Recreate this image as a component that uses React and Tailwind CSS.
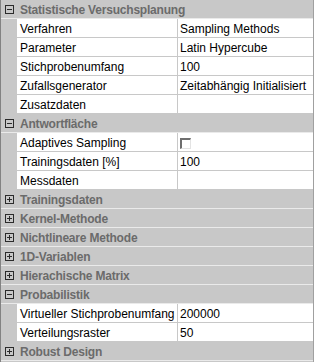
const sections = [
  {
    title: 'Statistische Versuchsplanung',
    open: true,
    rows: [
      ['Verfahren', 'Sampling Methods'],
      ['Parameter', 'Latin Hypercube'],
      ['Stichprobenumfang', '100'],
      ['Zufallsgenerator', 'Zeitabhängig Initialisiert'],
      ['Zusatzdaten', ''],
    ],
  },
  {
    title: 'Antwortfläche',
    open: true,
    rows: [
      ['Adaptives Sampling', 'checkbox'],
      ['Trainingsdaten [%]', '100'],
      ['Messdaten', ''],
    ],
  },
  { title: 'Trainingsdaten', open: false, rows: [] },
  { title: 'Kernel-Methode', open: false, rows: [] },
  { title: 'Nichtlineare Methode', open: false, rows: [] },
  { title: '1D-Variablen', open: false, rows: [] },
  { title: 'Hierachische Matrix', open: false, rows: [] },
  {
    title: 'Probabilistik',
    open: true,
    rows: [
      ['Virtueller Stichprobenumfang', '200000'],
      ['Verteilungsraster', '50'],
    ],
  },
  { title: 'Robust Design', open: false, rows: [] },
];

function ToggleBox({ open }) {
  return (
    <svg width="9" height="9" viewBox="0 0 9 9" className="shrink-0">
      <rect x="0.5" y="0.5" width="8" height="8" fill="none" stroke="#2b2b2b" />
      <line x1="2" y1="4.5" x2="7" y2="4.5" stroke="#2b2b2b" />
      {!open && <line x1="4.5" y1="2" x2="4.5" y2="7" stroke="#2b2b2b" />}
    </svg>
  );
}

function Checkbox() {
  return (
    <span className="block h-[11px] w-[11px] border-t-2 border-l-2 border-t-[#6e6e6e] border-l-[#6e6e6e] border-r border-b border-r-[#e3e3e3] border-b-[#e3e3e3] bg-white" />
  );
}

function Header({ title, open }) {
  return (
    <div className="flex h-[19px] items-center border-b border-[#eaeaea] bg-[#c8c8c8]">
      <div className="flex w-[16px] shrink-0 items-center justify-center pl-[1px]">
        <ToggleBox open={open} />
      </div>
      <span className="pl-[3px] pt-[2px] text-[12px] font-bold tracking-[-0.2px] text-[#6b6b6b]">{title}</span>
    </div>
  );
}

function Row({ label, value }) {
  return (
    <div className="flex h-[19px] bg-[#c8c8c8]">
      <div className="w-[16px] shrink-0" />
      <div className="flex w-[160px] shrink-0 items-center overflow-hidden whitespace-nowrap border-b border-[#c8c8c8] bg-white pl-[3px] pt-[2px]">
        {label}
      </div>
      <div className="flex flex-1 items-center overflow-hidden whitespace-nowrap border-b border-l border-[#c8c8c8] bg-white pl-[2px] pt-[2px]">
        {value === 'checkbox' ? <Checkbox /> : value}
      </div>
    </div>
  );
}

export default function App() {
  return (
    <div
      className="h-[362px] w-[314px] overflow-hidden border-l border-r border-l-[#828282] border-r-[#a0a0a0] bg-[#c8c8c8] text-[12px] leading-none text-black"
      style={{ fontFamily: '"Liberation Sans", Arial, sans-serif' }}
    >
      {sections.map((s) => (
        <div key={s.title}>
          <Header title={s.title} open={s.open} />
          {s.open && s.rows.map(([l, v]) => <Row key={l} label={l} value={v} />)}
        </div>
      ))}
    </div>
  );
}
